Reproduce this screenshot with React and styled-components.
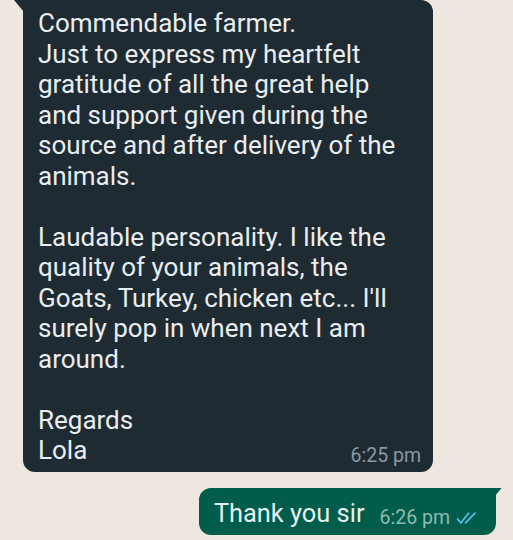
import styled, { createGlobalStyle } from 'styled-components'

const Global = createGlobalStyle`
  html, body { margin: 0; padding: 0; }
  body {
    background: #ede7e0;
    font-family: Roboto, "Noto Sans", "Liberation Sans", sans-serif;
  }
`

const Chat = styled.div`
  width: 513px;
  height: 540px;
  overflow: hidden;
  box-sizing: border-box;
  background: #ede7e0;
  display: flex;
  flex-direction: column;
  row-gap: 16px;
`

const Bubble = styled.div`
  position: relative;
  box-sizing: border-box;
  color: #e9edef;
  background: ${p => (p.$out ? '#005c4b' : '#1f2b33')};
  border-radius: ${p => (p.$out ? '12px 0 12px 12px' : '0 12px 12px 12px')};

  &::before {
    content: '';
    position: absolute;
    top: 0;
    width: 10px;
    height: 12px;
    background: inherit;
    ${p =>
      p.$out
        ? 'right: -6px; clip-path: polygon(0 0, 100% 0, 0 100%);'
        : 'left: -9px; clip-path: polygon(0 0, 100% 0, 100% 100%);'}
  }
`

const Incoming = styled(Bubble)`
  margin-left: 23px;
  width: 410px;
  padding: 8px 12px 6px 15px;
`

const Outgoing = styled(Bubble)`
  align-self: flex-end;
  margin-right: 17px;
  display: flex;
  align-items: flex-end;
  column-gap: 15px;
  padding: 10px 18px 7px 15px;
`

const Text = styled.div`
  font-size: ${p => p.$size || '26px'};
  line-height: 30.5px;
  white-space: pre-line;
`

const LastRow = styled.div`
  display: flex;
  justify-content: space-between;
  align-items: flex-end;
`

const Time = styled.span`
  display: flex;
  align-items: center;
  column-gap: 6px;
  font-size: 19.5px;
  line-height: 20px;
  color: ${p => (p.$out ? '#93bab2' : '#8a99a2')};
`

function Ticks() {
  return (
    <svg width="22" height="14" viewBox="0 0 22 14" fill="none" stroke="#53bdeb" strokeWidth="1.8" strokeLinecap="round" strokeLinejoin="round">
      <path d="M1.5 8.2 L5 11.8 L12.5 2.2" />
      <path d="M9.5 11.8 L19 2.2" />
    </svg>
  )
}

const message = `Commendable farmer.
Just to express my heartfelt
gratitude of all the great help
and support given during the
source and after delivery of the
animals.

Laudable personality. I like the
quality of your animals, the
Goats, Turkey, chicken etc... I'll
surely pop in when next I am
around.

Regards`

export default function App() {
  return (
    <>
      <Global />
      <Chat>
        <Incoming>
          <Text>{message}</Text>
          <LastRow>
            <Text>Lola</Text>
            <Time>6:25 pm</Time>
          </LastRow>
        </Incoming>
        <Outgoing $out>
          <Text $size="25.4px">Thank you sir</Text>
          <Time $out>
            6:26 pm
            <Ticks />
          </Time>
        </Outgoing>
      </Chat>
    </>
  )
}
